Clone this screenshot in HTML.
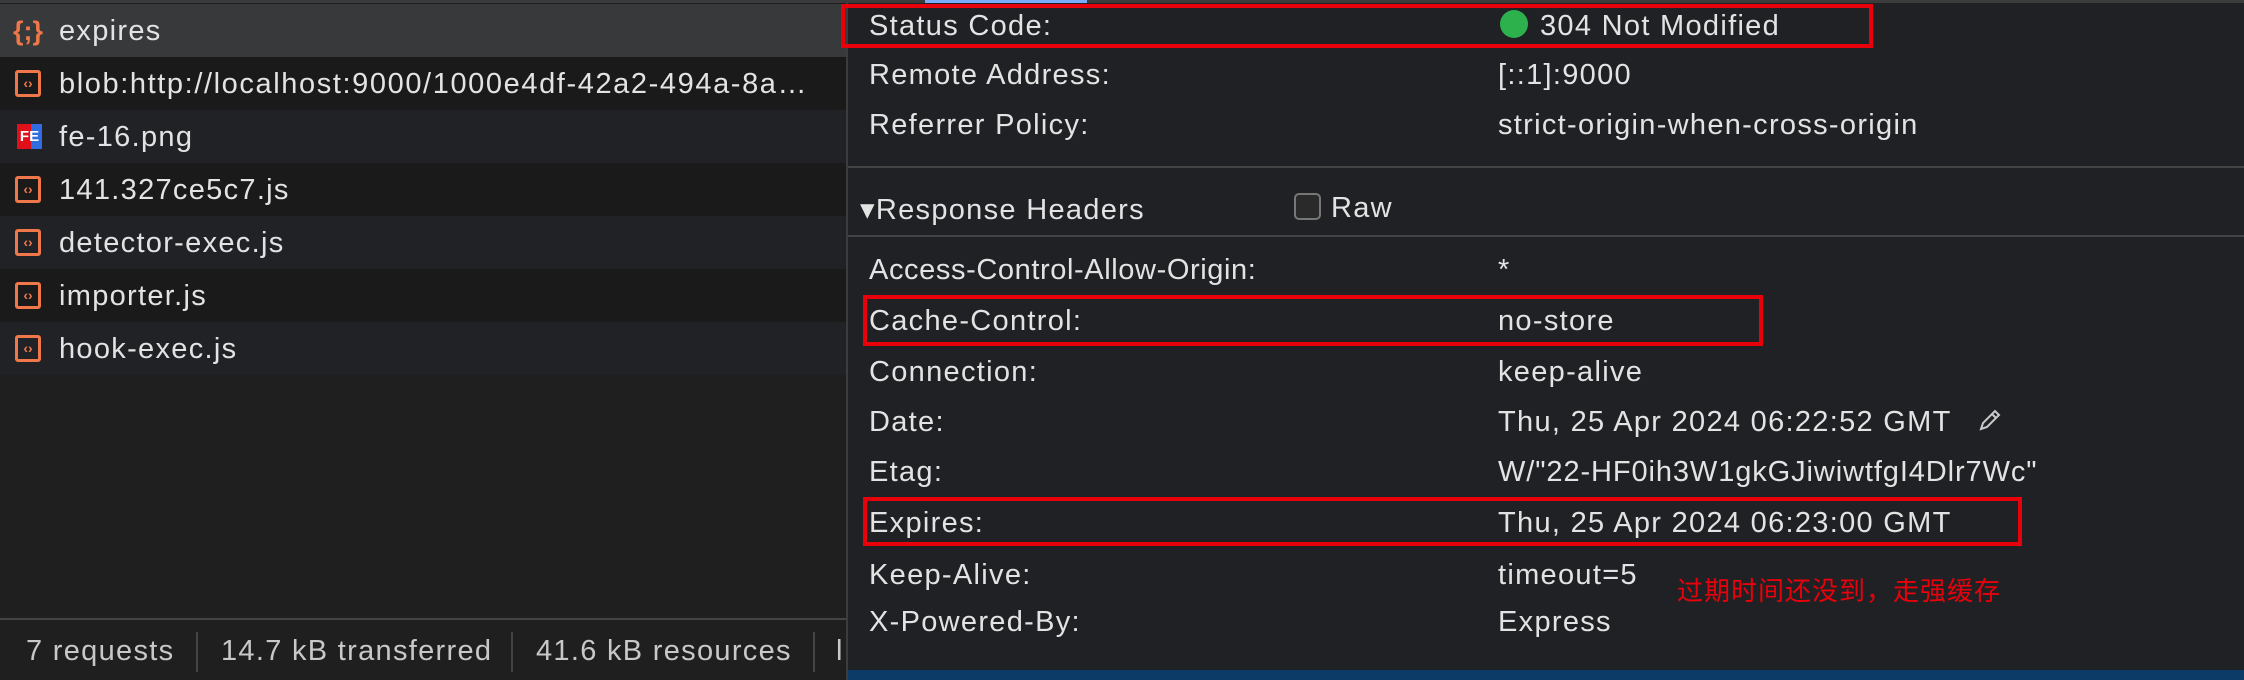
<!DOCTYPE html>
<html><head><meta charset="utf-8"><style>
body{margin:0;width:2244px;height:680px;background:#202124;overflow:hidden;font-family:"Liberation Sans","Noto Sans CJK SC",sans-serif;color:#e3e3e3;font-size:29px;letter-spacing:1.3px;position:relative}
.a{position:absolute;white-space:nowrap}
#left{position:absolute;left:0;top:0;width:846px;height:680px;background:#1f1f1f;border-right:2px solid #3c3c3c;overflow:hidden}
.row{position:absolute;left:0;width:846px;height:53px;line-height:55px}
.row span{position:absolute;left:59px;white-space:nowrap}
.ic{position:absolute;left:15px;top:13px;width:26px;height:27px;border:3px solid #f0774a;border-radius:3px;box-sizing:border-box;color:#f0774a;font-size:14px;letter-spacing:0;line-height:20px;text-align:center;font-weight:bold}
.lab{position:absolute;left:869px}
.val{position:absolute;left:1498px}
.box{position:absolute;border:4px solid #e8000b;box-sizing:border-box}
</style></head><body>
<div id="left">
<div style="position:absolute;left:0;top:0;width:846px;height:3px;background:#3c3c3c"></div>
<div class="row" style="top:4px;background:#38393a"><div style="position:absolute;left:13px;top:0;color:#f0774a;font-size:27px;letter-spacing:0;font-weight:bold">{;}</div><span>expires</span></div>
<div class="row" style="top:57px;background:#1a1a1a"><div class="ic">‹›</div><span style="letter-spacing:1.6px">blob:http://localhost:9000/1000e4df-42a2-494a-8a…</span></div>
<div class="row" style="top:110px;background:#202226"><div style="position:absolute;left:17px;top:14px;width:25px;height:25px;background:linear-gradient(90deg,#e0101a 55%,#2f6de0 55%);color:#fff;font-size:15px;letter-spacing:0;font-weight:bold;line-height:25px;text-align:center">FE</div><span>fe-16.png</span></div>
<div class="row" style="top:163px;background:#1a1a1a"><div class="ic">‹›</div><span>141.327ce5c7.js</span></div>
<div class="row" style="top:216px;background:#202226"><div class="ic">‹›</div><span>detector-exec.js</span></div>
<div class="row" style="top:269px;background:#1a1a1a"><div class="ic">‹›</div><span>importer.js</span></div>
<div class="row" style="top:322px;background:#202226"><div class="ic">‹›</div><span>hook-exec.js</span></div>
<div style="position:absolute;left:0;top:618px;width:846px;height:2px;background:#444"></div>
<div class="a" style="left:26px;top:635px;color:#c8c8c8">7 requests</div>
<div style="position:absolute;left:196px;top:632px;width:2px;height:40px;background:#444"></div>
<div class="a" style="left:221px;top:635px;color:#c8c8c8">14.7 kB transferred</div>
<div style="position:absolute;left:511px;top:632px;width:2px;height:40px;background:#444"></div>
<div class="a" style="left:536px;top:635px;color:#c8c8c8">41.6 kB resources</div>
<div style="position:absolute;left:813px;top:632px;width:2px;height:40px;background:#444"></div>
<div class="a" style="left:836px;top:635px;color:#c8c8c8">l</div>
</div>
<div style="position:absolute;left:848px;top:0;width:1396px;height:3px;background:#3c3c3c"></div>
<div style="position:absolute;left:925px;top:0;width:162px;height:3px;background:#7cacf8"></div>
<div class="lab a" style="top:10px">Status Code:</div>
<div style="position:absolute;left:1500px;top:10px;width:28px;height:28px;border-radius:50%;background:#2db14c"></div>
<div class="a" style="left:1540px;top:10px">304 Not Modified</div>
<div class="lab a" style="top:59px">Remote Address:</div><div class="val a" style="top:59px">[::1]:9000</div>
<div class="lab a" style="top:109px">Referrer Policy:</div><div class="val a" style="top:109px">strict-origin-when-cross-origin</div>
<div style="position:absolute;left:848px;top:166px;width:1396px;height:2px;background:#444"></div>
<div class="a" style="left:860px;top:192px">▾Response Headers</div>
<div style="position:absolute;left:1294px;top:193px;width:27px;height:27px;border:2px solid #777;border-radius:5px;box-sizing:border-box;background:#2a2a2a"></div>
<div class="a" style="left:1331px;top:192px">Raw</div>
<div style="position:absolute;left:848px;top:235px;width:1396px;height:2px;background:#444"></div>
<div class="lab a" style="top:254px;letter-spacing:0.6px">Access-Control-Allow-Origin:</div><div class="val a" style="top:254px">*</div>
<div class="lab a" style="top:305px">Cache-Control:</div><div class="val a" style="top:305px">no-store</div>
<div class="lab a" style="top:356px">Connection:</div><div class="val a" style="top:356px">keep-alive</div>
<div class="lab a" style="top:406px">Date:</div><div class="val a" style="top:406px">Thu, 25 Apr 2024 06:22:52 GMT</div>
<svg style="position:absolute;left:1976px;top:406px" width="28" height="28" viewBox="0 0 28 28"><path d="M5 23 L7 17 L19 5 L23 9 L11 21 Z M16 8 L20 12" fill="none" stroke="#c8c8c8" stroke-width="2"/></svg>
<div class="lab a" style="top:456px">Etag:</div><div class="val a" style="top:456px;letter-spacing:0.9px">W/"22-HF0ih3W1gkGJiwiwtfgI4Dlr7Wc"</div>
<div class="lab a" style="top:507px">Expires:</div><div class="val a" style="top:507px">Thu, 25 Apr 2024 06:23:00 GMT</div>
<div class="lab a" style="top:559px">Keep-Alive:</div><div class="val a" style="top:559px">timeout=5</div>
<div class="lab a" style="top:606px">X-Powered-By:</div><div class="val a" style="top:606px">Express</div>
<div class="a" style="left:1677px;top:571px;color:#e8000b;font-size:26px;letter-spacing:1px">过期时间还没到，走强缓存</div>
<div style="position:absolute;left:848px;top:670px;width:1396px;height:10px;background:#0b3b66"></div>
<div class="box" style="left:841px;top:4px;width:1032px;height:44px"></div>
<div class="box" style="left:863px;top:295px;width:900px;height:51px"></div>
<div class="box" style="left:863px;top:497px;width:1159px;height:49px"></div>
</body></html>
